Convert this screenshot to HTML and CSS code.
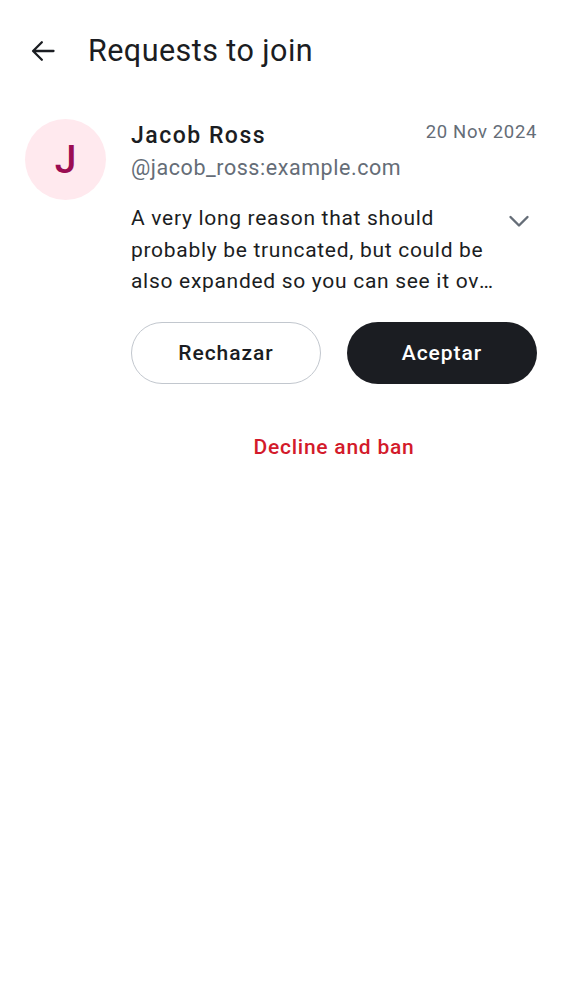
FILE: index.html
```html
<!DOCTYPE html>
<html>
<head>
<meta charset="utf-8">
<link rel="stylesheet" href="styles.css">
</head>
<body>
<header class="topbar">
  <button class="back" aria-label="Back">
    <svg width="28" height="28" viewBox="0 0 24 24"><path d="M21 12H4M11 4.5L3.5 12 11 19.5" fill="none" stroke="#1b1d22" stroke-width="2" stroke-linecap="round" stroke-linejoin="round"/></svg>
  </button>
  <h1 class="title">Requests to join</h1>
</header>
<main class="request">
  <div class="avatar">J</div>
  <div class="content">
    <div class="head">
      <div class="who">
        <div class="name">Jacob Ross</div>
        <div class="handle">@jacob_ross:example.com</div>
      </div>
      <div class="date">20 Nov 2024</div>
    </div>
    <div class="reason-row">
      <p class="reason">A very long reason that should probably be truncated, but could be also expanded so you can see it over several lines</p>
      <svg class="chev" width="24" height="24" viewBox="0 0 24 24"><path d="M3.5 9L12 17.5 20.5 9" fill="none" stroke="#656d77" stroke-width="2.4" stroke-linecap="round" stroke-linejoin="round"/></svg>
    </div>
    <div class="actions">
      <button class="btn btn-outline">Rechazar</button>
      <button class="btn btn-solid">Aceptar</button>
    </div>
    <div class="ban">Decline and ban</div>
  </div>
</main>
</body>
</html>
```
FILE: styles.css
```css
* { box-sizing: border-box; }
body {
  margin: 0;
  background: #ffffff;
  font-family: Roboto, "Noto Sans", sans-serif;
  color: #1b1d22;
}
.topbar {
  display: flex;
  align-items: center;
  height: 100px;
  padding-left: 29px;
  gap: 31px;
}
.back {
  border: 0;
  background: none;
  padding: 0;
  width: 28px;
  height: 28px;
  display: flex;
  margin-top: 2px;
}
.title {
  margin: 0;
  font-size: 30.5px;
  font-weight: 400;
  letter-spacing: 0.45px;
}
.request {
  display: flex;
  gap: 25px;
  padding: 19px 25px 0 25px;
}
.avatar {
  flex: none;
  width: 81px;
  height: 81px;
  border-radius: 50%;
  background: #ffe9ee;
  color: #9b0c52;
  font-size: 39px;
  font-weight: 500;
  display: flex;
  align-items: center;
  justify-content: center;
}
.content {
  flex: 1;
  min-width: 0;
}
.head {
  display: flex;
  justify-content: space-between;
  align-items: flex-start;
}
.who {
  padding-top: 1px;
}
.name {
  font-size: 23px;
  font-weight: 500;
  line-height: 32px;
  letter-spacing: 1.5px;
}
.handle {
  font-size: 21.5px;
  line-height: 32px;
  color: #656d77;
  letter-spacing: 0.55px;
}
.date {
  font-size: 18.5px;
  line-height: 26px;
  color: #656d77;
  letter-spacing: 0.65px;
}
.reason-row {
  display: flex;
  align-items: flex-start;
  gap: 6px;
  margin-top: 19px;
}
.reason {
  margin: 0;
  flex: 1;
  font-size: 21px;
  line-height: 31.5px;
  letter-spacing: 0.7px;
  display: -webkit-box;
  -webkit-line-clamp: 3;
  -webkit-box-orient: vertical;
  overflow: hidden;
}
.chev {
  flex: none;
  margin: 5px 6px 0 0;
}
.actions {
  display: grid;
  grid-template-columns: 1fr 1fr;
  gap: 26px;
  margin-top: 24px;
}
.btn {
  height: 62px;
  border-radius: 31px;
  font-family: Roboto, sans-serif;
  font-size: 21px;
  font-weight: 500;
  letter-spacing: 0.95px;
}
.btn-outline {
  background: #fff;
  border: 1.5px solid #c2c7ce;
  color: #1b1d22;
}
.btn-solid {
  background: #1b1d22;
  border: 0;
  color: #fff;
}
.ban {
  text-align: center;
  color: #d31a2b;
  font-size: 21px;
  font-weight: 500;
  letter-spacing: 0.75px;
  margin-top: 51px;
}
```
